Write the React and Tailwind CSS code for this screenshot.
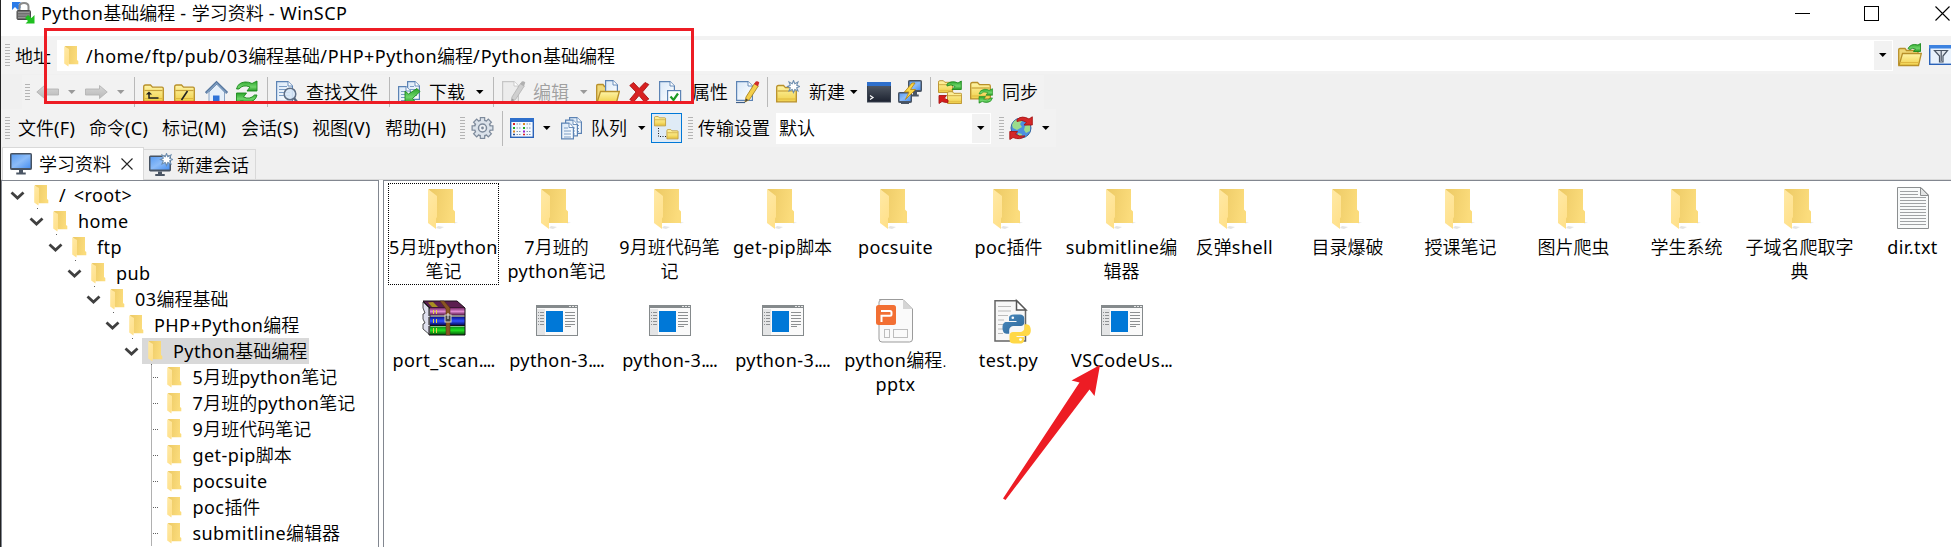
import React from "react";

/* Latin runs are slightly wider than the CJK grid, so they get their own tracking. */
function T({ children, className = "" }) {
  const parts = children.split(/(\.{3,}|\/|[\x20-\x2d\x30-\x7e]+(?:\.(?!\.)[\x20-\x2d\x30-\x7e]*)*)/).filter(Boolean);
  return (
    <span className={className}>
      {parts.map((p, i) => {
        if (/^\.{3,}/.test(p)) return <span key={i} className="font-normal tracking-[-0.9px]">{p}</span>;
        if (p === "/") return <span key={i} className="font-normal tracking-[0.9px]">{p}</span>;
        if (/^[\x20-\x7e]/.test(p)) return <span key={i} className="font-normal tracking-[0.42px]">{p}</span>;
        return <React.Fragment key={i}>{p}</React.Fragment>;
      })}
    </span>
  );
}

function Svg({ w = 24, h = 24, children, className = "" }) {
  return (
    <svg width={w} height={h} viewBox={`0 0 ${w} ${h}`} className={`block shrink-0 ${className}`}>
      {children}
    </svg>
  );
}

const Defs = () => (
  <svg width="0" height="0" className="absolute">
    <defs>
      <linearGradient id="fback" x1="0" y1="0" x2="1" y2="0.2"><stop offset="0" stopColor="#ecc964" /><stop offset="1" stopColor="#fbdc7c" /></linearGradient>
      <linearGradient id="ffront" x1="0" y1="0" x2="0.4" y2="1"><stop offset="0" stopColor="#ffe9a6" /><stop offset="1" stopColor="#ffe18c" /></linearGradient>
      <linearGradient id="yel" x1="0" y1="0" x2="0" y2="1"><stop offset="0" stopColor="#fff5a8" /><stop offset="1" stopColor="#f0d04a" /></linearGradient>
      <linearGradient id="grn" x1="0" y1="0" x2="0" y2="1"><stop offset="0" stopColor="#2aa52a" /><stop offset="0.6" stopColor="#6fd56a" /><stop offset="1" stopColor="#249a24" /></linearGradient>
      <linearGradient id="gry" x1="0" y1="0" x2="0" y2="1"><stop offset="0" stopColor="#d6d6d6" /><stop offset="1" stopColor="#b9b9b9" /></linearGradient>
      <linearGradient id="scr" x1="0" y1="0" x2="1" y2="1"><stop offset="0" stopColor="#5b9df2" /><stop offset="0.5" stopColor="#8cbcf8" /><stop offset="1" stopColor="#4a90f0" /></linearGradient>
      <linearGradient id="pap" x1="0" y1="0" x2="1" y2="1"><stop offset="0" stopColor="#d9e8f8" /><stop offset="1" stopColor="#ffffff" /></linearGradient>
      <linearGradient id="dark" x1="0" y1="0" x2="0" y2="1"><stop offset="0" stopColor="#59616c" /><stop offset="1" stopColor="#1c2230" /></linearGradient>
      <linearGradient id="rarp" x1="0" y1="0" x2="0" y2="1"><stop offset="0" stopColor="#7a2a6a" /><stop offset="0.5" stopColor="#e08ad0" /><stop offset="1" stopColor="#5a1a4c" /></linearGradient>
      <linearGradient id="rarb" x1="0" y1="0" x2="0" y2="1"><stop offset="0" stopColor="#0a1690" /><stop offset="0.5" stopColor="#3050ff" /><stop offset="1" stopColor="#060c60" /></linearGradient>
      <linearGradient id="rarg" x1="0" y1="0" x2="0" y2="1"><stop offset="0" stopColor="#0a8a14" /><stop offset="0.45" stopColor="#20e020" /><stop offset="1" stopColor="#045008" /></linearGradient>
      <linearGradient id="pyb" x1="0" y1="0" x2="1" y2="1"><stop offset="0" stopColor="#4b8bbe" /><stop offset="1" stopColor="#2c6699" /></linearGradient>
    </defs>
  </svg>
);

/* Small Explorer-style folder used in the tree and the address box. */
const FolderSmall = ({ dot }) => (
  <Svg w={15} h={22} className="overflow-visible">
    <path d="M1 1H13V15L14.3 16V19.3H5Z" fill="url(#fback)" />
    <path d="M0.2 1.2L5 4V17.5L4.4 21.6L0.2 18.6Z" fill="url(#ffront)" />
    {dot && <rect x="3" y="24" width="1" height="1" fill="#606060" />}
  </Svg>
);

const FolderLarge = () => (
  <Svg w={48} h={48}>
    <path d="M16 44L20 45L24 43L18 42Z M34 38L38 38.6L34 39.4Z" fill="#e4e4e4" />
    <path d="M8.5 5H33V25.5L35 27.5V39H12Z" fill="url(#fback)" />
    <path d="M8 5L17 12V33L16 34.5V45L8 39Z" fill="url(#ffront)" />
  </Svg>
);

const ExeIcon = () => (
  <Svg w={48} h={48}>
    <g transform="translate(-1 0)">
      <rect x="4.5" y="8.5" width="41" height="30" fill="#fafafa" stroke="#858a8c" />
      <rect x="4" y="8" width="42" height="3" fill="#858a8c" />
      <path d="M37 9.5h2M40 9.5h2M43 9.5h2" stroke="#e8e8e8" />
      <rect x="5" y="12" width="8" height="26" fill="#e4e5e6" />
      <path d="M6 15.5h1M8 15.5h4M6 18.5h1M8 18.5h4M6 21.5h1M8 21.5h4M6 24.5h1M8 24.5h4M6 27.5h1M8 27.5h4" stroke="#8d9092" />
      <rect x="14" y="14" width="17" height="21" fill="#0078d7" />
      <path d="M33 15.5h10M33 18.5h10M33 21.5h10M33 24.5h10M33 27.5h10M33 29.5h6" stroke="#8d9092" />
    </g>
  </Svg>
);

const RarIcon = () => (
  <Svg w={48} h={48}>
    <g transform="translate(-1 0)">
      <path d="M4 5L11 12V38L4 32V27L6 26L4 22V17L6 16L4 11Z" fill="#dfe0ee" stroke="#222" strokeWidth="0.8" />
      <path d="M4 4H38L46 11H11Z" fill="#5c1f50" stroke="#1c1018" />
      <path d="M9 5.500L13 10L19 10L14 5Z" fill="#a89020" />
      <path d="M11 11H46V18H11Z" fill="url(#rarp)" />
      <path d="M11 20H46V28H11Z" fill="url(#rarb)" />
      <path d="M11 29.500H46V38H11Z" fill="url(#rarg)" />
      <path d="M10 11V19M10 20V28M10 29V38M11 19H46M11 28.500H46M10 38H46M46 11V38" stroke="#141014" fill="none" />
      <path d="M14.500 13v4M17.500 13v4M14.500 22v4M17.500 22v4M14.500 31v5M17.500 31v5" stroke="#e6d24a" />
      <path d="M21 4H25L31 11V38H27V12Z" fill="#8a5523" stroke="#4c2c10" strokeWidth="0.5" />
      <rect x="26" y="18" width="6" height="7" fill="#444" stroke="#d8d4c8" />
      <path d="M29 16v6" stroke="#eee" />
    </g>
  </Svg>
);

const PptIcon = () => (
  <Svg w={48} h={48}>
    <g transform="translate(1 0)">
      <path d="M6.500 2.500H30L39.500 12V42a3 3 0 0 1-3 3H9a3 3 0 0 1-3-3V5a3 3 0 0 1 3-2.500Z" fill="#fafafa" stroke="#9b9b9b" />
      <path d="M30 3V12H39Z" fill="#d5d5d5" />
      <rect x="3" y="8" width="20" height="20" rx="2.500" fill="#f26f33" />
      <path d="M8 14h9a1.500 1.500 0 0 1 1.500 1.500v1.800a1.500 1.500 0 0 1-1.500 1.500H8.500V25" fill="none" stroke="#fff" strokeWidth="2" />
      <rect x="11.500" y="32.500" width="5" height="8" fill="none" stroke="#bdbdbd" />
      <rect x="20.500" y="32.500" width="14" height="8" fill="none" stroke="#bdbdbd" />
    </g>
  </Svg>
);

const PyIcon = () => (
  <Svg w={48} h={48}>
    <g transform="translate(1 0)">
      <path d="M9 3.700H30.500L39.500 13V44H9Z" fill="#f7f7f7" stroke="#666" strokeWidth="1.500" />
      <path d="M30.500 3.500V13H40Z" fill="#fff" stroke="#555" strokeWidth="1.500" />
      <path d="M12 9.500h13M12 14h13M12 18.500h10M12 23h6M12 27.500h6M12 32h6M12 36.500h5" stroke="#bbb" />
      <path d="M28 17.500c-3.500 0-5 1.200-5 3.600v3h7.500v1H20.500c-3 0-4 2.500-4 5.700s1.300 6 4 6h2.700v-3.500c0-2.600 2-4.300 4.300-4.300h7.200c2 0 3.500-1.500 3.500-3.500v-4.400c0-2.300-2-3.600-4.200-3.600Z" fill="url(#pyb)" />
      <path d="M33 46.500c3.500 0 5.200-1.200 5.200-3.600v-3H30.500v-1h9.800c3 0 4.500-2.500 4.500-5.700s-1.300-6-4.500-6h-1.800v3.500c0 2.600-2 4.300-4.300 4.300H27c-2 0-3.500 1.500-3.500 3.500v4.400c0 2.300 2 3.600 4.500 3.600Z" fill="#ffd846" />
      <circle cx="26.800" cy="20.800" r="1.300" fill="#fff" /><circle cx="34.500" cy="42.600" r="1.400" fill="#fff" />
    </g>
  </Svg>
);

const TxtIcon = () => (
  <Svg w={48} h={48}>
    <path d="M8.500 3.500H32L39.500 11V44.500H8.500Z" fill="#f8fafa" stroke="#8c8f90" />
    <path d="M31.500 3.500V11.500H39.500Z" fill="#e2e4e4" stroke="#8c8f90" />
    <path d="M11 7.500h18M11 10.500h18M11 13.500h26M11 16.500h26M11 19.500h26M11 22.500h26M11 25.500h26M11 28.500h26M11 31.500h26M11 34.500h26M11 37.500h26M11 40.500h26" stroke="#9fa2a4" />
  </Svg>
);

/* Toolbar glyphs */
const Fold = ({ x = 0, y = 0, s = 1, children }) => (
  <g transform={`translate(${x} ${y}) scale(${s})`}>
    <path d="M0.700 17.300V3Q0.700 1 2.500 1H7.500L9.500 3.200H19Q20.300 3.200 20.300 4.500V17.300Z" fill="url(#yel)" stroke="#b8902a" strokeWidth="1.300" />
    <path d="M1.500 6.500H19.500" stroke="#c8a23a" strokeWidth="1.200" />
    <path d="M2 14.500H19.500" stroke="#e0b840" />
    {children}
  </g>
);
const Doc = ({ x = 0, y = 0, w = 16, h = 20, gray, lines }) => (
  <g transform={`translate(${x} ${y})`}>
    <path d={`M0.600 0.600H${w - 5}L${w - 0.600} 5V${h - 0.600}H0.600Z`} fill={gray ? "#ececec" : "url(#pap)"} stroke={gray ? "#c6c6c6" : "#5c83b4"} strokeWidth="1.200" />
    <path d={`M${w - 5} 0.600V5H${w - 0.600}`} fill="#fff" stroke={gray ? "#c6c6c6" : "#5c83b4"} strokeWidth="0.900" />
    {lines && <path d={`M3 5.500H${w - 6}M3 8.500H${w - 3}M3 11.500H${w - 3}M3 14.500H${w - 3}`} stroke="#7b9cc4" />}
  </g>
);
const Monitor = ({ x = 0, y = 0, w = 22, h = 16 }) => (
  <g transform={`translate(${x} ${y})`}>
    <path d={`M${w / 2 - 2} ${h}h4v2.500h${w / 8}v2h-${4 + w / 4}v-2h${w / 8}Z`} fill="#4b5664" />
    <rect x="0.500" y="0.500" width={w - 1} height={h - 1} rx="0.800" fill="#4b5664" stroke="#465262" />
    <rect x="1.500" y="1.500" width={w - 3} height={h - 3.500} fill="url(#scr)" />
  </g>
);
const Star = ({ x, y }) => (
  <path transform={`translate(${x} ${y})`} d="M6 0L7.300 3.200L10.500 1.500L9.200 4.800L12 6L9.200 7.200L10.500 10.500L7.300 9L6 12L4.700 9L1.500 10.500L2.800 7.200L0 6L2.800 4.800L1.500 1.500L4.700 3.200Z" fill="#fff" stroke="#6f8fb0" strokeWidth="1.100" />
);
const Pencil = ({ gray }) => (
  <g>
    <path d="M10 17L18.500 3.500L22.300 6L13.500 19.500L9 22Z" fill={gray ? "#cfcfcf" : "#f4cf4a"} stroke={gray ? "#b5b5b5" : "#a88424"} strokeWidth="0.900" />
    <path d="M18 4L19.800 1.500Q21.500 0.800 23.300 2.500L22 6.200Z" fill={gray ? "#b0b0b0" : "#cf2a2a"} />
    <path d="M9 22L10 18.500L12.300 20Z" fill={gray ? "#999" : "#444"} />
  </g>
);
const ArrowGray = ({ flip }) => (
  <Svg>
    <path transform={flip ? "matrix(-1 0 0 1 24 0)" : undefined} d="M0.800 12L8.500 5.500V9H22.500V15H8.500V18.500Z" fill="url(#gry)" stroke="#b4b4b4" strokeWidth="0.900" />
  </Svg>
);
const Caret = ({ gray, className = "" }) => (
  <Svg w={8} h={4} className={className}><path d="M0 0H7.500L3.750 4Z" fill={gray ? "#9a9a9a" : "#000"} /></Svg>
);
const Recycle = ({ c = "url(#grn)", s = "#1d8a1d" }) => (
  <g fill={c} stroke={s} strokeWidth="0.900">
    <path d="M1.500 9Q3 2.500 10 2Q14 1.800 17 3.500L22 1V11H12L15 7Q8 4 4 9Z" />
    <path d="M22 15Q20.500 21.500 13.500 22Q9.500 22.200 6.500 20.500L1.500 23V13H11.500L8.500 17Q15 20 19.500 15Z" />
  </g>
);

const Grip = ({ n }) => (
  <Svg w={5} h={n * 3 - 2}>
    {Array.from({ length: n }, (_, i) => <rect key={i} x="0" y={i * 3} width="5" height="1" fill="#b4b4b4" />)}
  </Svg>
);
const Sep = ({ className = "h-[30px]" }) => <div className={`w-px bg-[#b9b9b9] ${className}`} />;
const Slot = ({ className, children }) => <div className={`flex shrink-0 items-center ${className}`}>{children}</div>;

const GearIcon = () => (
  <Svg>
    <g stroke="#7d8a9b" strokeLinecap="butt">
      {[0, 45, 90, 135].map((a) => (
        <path key={a} transform={`rotate(${a} 11.500 12)`} d="M11.500 1V23" strokeWidth="5.500" />
      ))}
    </g>
    <circle cx="11.500" cy="12" r="8" fill="#dbe2ea" stroke="#7d8a9b" strokeWidth="1.400" />
    <g stroke="#dbe2ea">
      {[0, 45, 90, 135].map((a) => (
        <path key={a} transform={`rotate(${a} 11.500 12)`} d="M11.500 2.200V21.800" strokeWidth="3.200" />
      ))}
    </g>
    <circle cx="11.500" cy="12" r="4" fill="#eef1f5" stroke="#7d8a9b" strokeWidth="1.500" />
    <circle cx="11.500" cy="12" r="1.400" fill="#7d8a9b" />
  </Svg>
);

function Toolbar() {
  return (
    <div className="ml-[21px] mt-px flex h-[34px] w-[1022px] items-center bg-[#f2f2f2] pl-[3px]">
      <Slot className="w-[11px]"><Grip n={6} /></Slot>
      <Slot className="w-8"><ArrowGray /></Slot>
      <Slot className="w-4"><Caret gray /></Slot>
      <Slot className="w-[33px]"><ArrowGray flip /></Slot>
      <Slot className="w-[17px]"><Caret gray /></Slot>
      <Slot className="w-[9px]"><Sep /></Slot>
      <Slot className="w-[31px]"><Svg><Fold y={4}><path d="M15.500 14H6V9" fill="none" stroke="#222" strokeWidth="1.500" /><path d="M2.800 10.500L6 7.500L9.200 10.500Z" fill="#222" /></Fold></Svg></Slot>
      <Slot className="w-[31px]"><Svg><Fold y={4}><path d="M7.500 16L13.500 7" stroke="#222" strokeWidth="1.600" /></Fold></Svg></Slot>
      <Slot className="w-[30px]">
        <Svg>
          <path d="M4 12V22.500H19.500V12L12 4Z" fill="#e6f0fa" stroke="#8aa4c4" />
          <path d="M0.800 13L11.500 2.500L22.200 13" fill="none" stroke="#55769e" strokeWidth="2.600" />
          <path d="M1.500 13L11.500 3.200L21.500 13" fill="none" stroke="#a9c6e4" strokeWidth="0.800" />
          <rect x="8" y="15.500" width="6.500" height="7.500" fill="#2f74d8" />
        </Svg>
      </Slot>
      <Slot className="w-8"><Svg><Recycle /></Svg></Slot>
      <Slot className="w-[9px]"><Sep /></Slot>
      <Slot className="w-[30px]">
        <Svg>
          <Doc x={0} y={1} w={17} h={21} lines />
          <circle cx="14" cy="14" r="5.800" fill="#d6e6f6" fillOpacity="0.900" stroke="#5f6f86" strokeWidth="1.500" />
          <path d="M17.800 18L22 23" stroke="#55667c" strokeWidth="2.400" />
        </Svg>
      </Slot>
      <Slot className="w-[83px]"><T>查找文件</T></Slot>
      <Slot className="w-[9px]"><Sep /></Slot>
      <Slot className="w-[31px]">
        <Svg>
          <Doc x={9} y={1} w={13} h={19} lines /><Doc x={0} y={6} w={13} h={17} lines />
          <path d="M7 23V11L10.500 14L19 8.500L22 11.500L14.500 18.500L18 22.500Z" fill="url(#grn)" stroke="#1d8a1d" strokeWidth="0.900" />
        </Svg>
      </Slot>
      <Slot className="w-[47px]"><T>下载</T></Slot>
      <Slot className="w-[17px]"><Caret /></Slot>
      <Slot className="w-[9px]"><Sep /></Slot>
      <Slot className="w-[31px]"><Svg><Doc y={1} w={17} h={22} gray /><Pencil gray /></Svg></Slot>
      <Slot className="w-[47px] text-[#a0a0a0]"><T>编辑</T></Slot>
      <Slot className="w-4"><Caret gray /></Slot>
      <Slot className="w-[33px]">
        <Svg>
          <path d="M0.700 22V5.500Q0.700 4.500 2 4.500H7L8.500 6.500H18V22Z" fill="#f0d878" stroke="#b8902a" strokeWidth="1.300" />
          <Doc x={9} y={0} w={13} h={16} />
          <path d="M4.500 11.500H23.300L20.500 22.500H1Z" fill="url(#yel)" stroke="#b8902a" strokeWidth="1.300" />
        </Svg>
      </Slot>
      <Slot className="w-[30px]">
        <Svg><path d="M0.800 5.500L4.500 2.500L10.200 8.500L16 2.500L19.800 4.500L13.500 12L19.800 19L15.500 22L10 15.500L4.500 22L0.800 19.500L7 12Z" fill="#d82020" stroke="#a81414" strokeWidth="0.900" /></Svg>
      </Slot>
      <Slot className="w-[33px]">
        <Svg><Doc y={1} w={16} h={21} /><rect x="8.600" y="10.600" width="13" height="12" fill="#fff" stroke="#5c83b4" strokeWidth="1.200" /><path d="M11.500 16.500L14.500 20L19 13.500" fill="none" stroke="#1e9a24" strokeWidth="2.200" /></Svg>
      </Slot>
      <Slot className="w-11"><T>属性</T></Slot>
      <Slot className="w-[31px]"><Svg><Doc y={1} w={17} h={20} /><path d="M0 22.500H9" stroke="#3f5f88" strokeWidth="1.200" /><Pencil /></Svg></Slot>
      <Slot className="w-[9px]"><Sep /></Slot>
      <Slot className="w-[33px]"><Svg><Fold y={4.500} /><Star x={11.500} y={0.500} /></Svg></Slot>
      <Slot className="w-[41px]"><T>新建</T></Slot>
      <Slot className="w-[17px]"><Caret /></Slot>
      <Slot className="w-[31px]">
        <Svg><rect x="0.500" y="2.500" width="23" height="19.500" fill="url(#dark)" stroke="#3a4350" /><rect x="0" y="2" width="24" height="4" fill="#2e6fcb" /><path d="M3 15.500L6 17.500L3 19.500" fill="none" stroke="#fff" strokeWidth="1.200" /></Svg>
      </Slot>
      <Slot className="w-8">
        <Svg><Monitor x={10} y={0} w={14} h={12} /><Monitor x={0} y={12} w={14} h={11} /><path d="M14 3L6.500 12H11L7.500 19.500L17.500 9.500H12.500L17 3Z" fill="#fbd848" stroke="#b88a1c" strokeWidth="0.900" /><path d="M3 23.500h8" stroke="#4b5664" /></Svg>
      </Slot>
      <Slot className="w-2"><Sep /></Slot>
      <Slot className="w-8">
        <Svg>
          <Fold s={0.720} y={0} /><Fold x={9} y={11} s={0.720} />
          <path d="M9 4Q14 0 20 3L23.300 1V9.500H14L17 6.500Q13 3.500 9 6Z" fill="url(#grn)" stroke="#1d8a1d" strokeWidth="0.900" />
          <path d="M1 15.500H8.500L6.500 18Q7.500 19.500 10 20V22.500Q6 22.500 4 21.500L1 23.500Z" fill="#d41c1c" stroke="#a81414" strokeWidth="0.900" />
        </Svg>
      </Slot>
      <Slot className="w-8"><Svg><Fold y={1.500} /><g transform="translate(8 8) scale(0.660)"><Recycle /></g></Svg></Slot>
      <Slot className="w-10"><T>同步</T></Slot>
    </div>
  );
}

function MenuBar() {
  return (
    <div className="flex h-[38px] items-center">
      <div className="flex h-full w-[1055px] items-center bg-[#f2f2f2] pl-1">
        <Slot className="w-[13px]"><Grip n={8} /></Slot>
        <Slot className="w-[71px]"><T>文件(F)</T></Slot>
        <Slot className="w-[73px]"><T>命令(C)</T></Slot>
        <Slot className="w-[79px]"><T>标记(M)</T></Slot>
        <Slot className="w-[71px]"><T>会话(S)</T></Slot>
        <Slot className="w-[73px]"><T>视图(V)</T></Slot>
        <Slot className="w-[75px]"><T>帮助(H)</T></Slot>
        <Slot className="w-[11px]"><Grip n={8} /></Slot>
        <Slot className="w-[31px]"><GearIcon /></Slot>
        <Slot className="w-2"><Sep className="h-[35px]" /></Slot>
        <Slot className="w-[33px]">
          <Svg>
            <rect x="0.700" y="2.700" width="22.600" height="18.600" fill="#f4f9ff" stroke="#2a62b8" strokeWidth="1.400" /><rect x="0" y="2" width="24" height="4" fill="#2e6fcb" />
            <path d="M3 8h2" stroke="#d22" strokeWidth="2" /><path d="M3 12h2" stroke="#2a2" strokeWidth="2" /><path d="M3 15.500h2" stroke="#d82" strokeWidth="2" /><path d="M3 18.500h2" stroke="#248" strokeWidth="1.500" />
            <path d="M13 8h2" stroke="#d82" strokeWidth="2" /><path d="M13 12h2" stroke="#2a2" strokeWidth="2" /><path d="M13 15.500h2" stroke="#92c" strokeWidth="2" /><path d="M13 18.500h2" stroke="#d22" strokeWidth="1.500" />
            <path d="M6.500 8h4M6.500 12h4M6.500 15.500h4M6.500 18.500h4M16.500 8h4M16.500 12h4M16.500 15.500h4M16.500 18.500h4" stroke="#7f93ad" strokeDasharray="1.500 1" />
          </Svg>
        </Slot>
        <Slot className="w-[18px]"><Caret /></Slot>
        <Slot className="w-[30px]"><Svg><Doc x={8} y={1} w={13} h={17} lines /><Doc x={4} y={3.500} w={13} h={17} lines /><Doc x={0} y={6.500} w={13} h={17} lines /></Svg></Slot>
        <Slot className="w-[47px]"><T>队列</T></Slot>
        <Slot className="w-[13px]"><Caret /></Slot>
        <Slot className="w-[37px]">
          <div className="flex h-[30px] w-[31px] items-center justify-center border border-[#0078d7] bg-[#dfebf6]">
            <Svg w={25} h={24}><Fold s={0.570} y={0} /><Fold x={12.500} y={13} s={0.570} /><path d="M4.500 12V20.500H12" fill="none" stroke="#222" strokeDasharray="1 1.500" /></Svg>
          </div>
        </Slot>
        <Slot className="w-[10px]"><Grip n={8} /></Slot>
        <Slot className="w-[78px]"><T>传输设置</T></Slot>
        <Slot className="w-[223px]">
          <div className="flex h-[31px] w-[215px] items-center justify-between bg-white pl-[3px] pr-px">
            <T>默认</T>
            <div className="flex h-[29px] w-[18px] items-center justify-center bg-[#f2f2f2]"><Caret /></div>
          </div>
        </Slot>
        <Slot className="w-[10px]"><Grip n={8} /></Slot>
        <Slot className="w-[33px]">
          <Svg>
            <circle cx="12" cy="12" r="10" fill="#4c90e0" stroke="#35679f" />
            <path d="M5 5Q10 2 13 5L11 8L13 11L8 14L4 12L3 9ZM16 10L21 8L21 15L17 17L15 14ZM9 17L13 18L12 21L9 20Z" fill="#9bdc8c" />
            <path d="M8 3.500Q13 -1 20 3L23.300 0.800V9H15L17.500 6.200Q13 3 8 5.500Z" fill="#d42828" stroke="#a81414" strokeWidth="0.900" />
            <path d="M0.800 15.500H8.500L6.500 18.200Q10 20.800 16 20Q11 24.500 4 21.500L0.800 23.500Z" fill="#d42828" stroke="#a81414" strokeWidth="0.900" />
          </Svg>
        </Slot>
        <Slot className="w-2"><Caret /></Slot>
      </div>
    </div>
  );
}

const branch = ["/ <root>", "home", "ftp", "pub", "03编程基础", "PHP+Python编程", "Python基础编程"];
const leaves = ["5月班python笔记", "7月班的python笔记", "9月班代码笔记", "get-pip脚本", "pocsuite", "poc插件", "submitline编辑器"];

function Tree() {
  return (
    <div className="h-full w-[378px] shrink-0 overflow-hidden border border-b-0 border-[#828790] bg-white pt-px">
      {branch.map((name, i) => (
        <div key={name} className="flex h-[26px] items-center" style={{ paddingLeft: 8 + i * 19 }}>
          <Svg w={15} h={9}><path d="M1.500 1.500L7.500 7L13.500 1.500" fill="none" stroke="#404040" strokeWidth="2.800" /></Svg>
          <div className={`ml-[3px] flex h-[26px] items-center pl-[6px] pr-[2px] ${i === 6 ? "bg-[#d9d9d9]" : ""}`}>
            <FolderSmall dot />
            <T className={i === 0 ? "ml-[10px] whitespace-pre [word-spacing:2px]" : "ml-[10px] whitespace-pre"}>{name}</T>
          </div>
        </div>
      ))}
      {leaves.map((name) => (
        <div key={name} className="flex h-[26px] items-center pl-[149px]">
          <Svg w={8} h={26}>
            <path d="M0.500 0.500V26" stroke="#606060" strokeDasharray="1 1" />
            <path d="M2 13.500H8" stroke="#606060" strokeDasharray="1 1" />
          </Svg>
          <div className="ml-2"><FolderSmall /></div>
          <T className="ml-[10.500px]">{name}</T>
        </div>
      ))}
    </div>
  );
}

const files = [
  [FolderLarge, "5月班python", "笔记"], [FolderLarge, "7月班的", "python笔记"], [FolderLarge, "9月班代码笔", "记"], [FolderLarge, "get-pip脚本"],
  [FolderLarge, "pocsuite"], [FolderLarge, "poc插件"], [FolderLarge, "submitline编", "辑器"], [FolderLarge, "反弹shell"], [FolderLarge, "目录爆破"],
  [FolderLarge, "授课笔记"], [FolderLarge, "图片爬虫"], [FolderLarge, "学生系统"], [FolderLarge, "子域名爬取字", "典"], [TxtIcon, "dir.txt"],
  [RarIcon, "port_scan...."], [ExeIcon, "python-3...."], [ExeIcon, "python-3...."], [ExeIcon, "python-3...."], [PptIcon, "python编程.", "pptx"],
  [PyIcon, "test.py"], [ExeIcon, "VSCodeUs..."],
];

function Files() {
  return (
    <div className="ml-1 h-full flex-1 overflow-hidden border-l border-t border-[#828790] bg-white pl-1 pt-[2px]">
      <div className="grid w-[1582px] grid-cols-[repeat(14,113px)]">
        {files.map(([Icon, a, b], i) => (
          <div key={i} className={`mb-[11px] flex h-[102px] w-[111px] flex-col items-center border ${i === 0 ? "border-dotted border-black" : "border-transparent"}`}>
            <Icon />
            <div className="mt-[3px] flex flex-col items-center whitespace-nowrap leading-6">
              <T>{a}</T>
              {b && <T>{b}</T>}
            </div>
          </div>
        ))}
      </div>
    </div>
  );
}

export default function App() {
  return (
    <div className="relative flex h-[547px] w-[1951px] flex-col overflow-hidden border-l border-[#222] bg-[#f0f0f0] font-['Noto_Sans','Noto_Sans_CJK_SC',sans-serif] text-[18px] font-[350] leading-[26px] text-black">
      <Defs />
      <div className="flex h-9 shrink-0 items-start bg-white pl-[11px]">
        <Svg w={24} h={24} className="mt-px">
          <path d="M0 1H9L6.500 3.500L9 6L6 9L3 6L0 9Z" fill="#2b7be8" />
          <path d="M7.500 10V5.500Q7.500 2 12 2T16.500 5.500V10" fill="none" stroke="#8a8a8a" strokeWidth="2" />
          <rect x="5" y="9.500" width="13.500" height="9" rx="1" fill="#707070" stroke="#4a4a4a" />
          <path d="M6 11.500H17.500M6 14H17.500M6 16.500H17.500" stroke="#979797" />
          <path d="M22.500 22.500H13.500L16 20L13 17L16 14L19.500 17L22.500 14Z" fill="#1fc020" />
        </Svg>
        <T className="ml-[5px]">Python基础编程 - 学习资料 - WinSCP</T>
        <Svg w={156} h={16} className="ml-auto mt-[6px]">
          <path d="M0 7.500H15" stroke="#000" /><rect x="69.500" y="0.500" width="14" height="14" fill="none" stroke="#000" /><path d="M140.500 0.500L154.500 14.500M154.500 0.500L140.500 14.500" stroke="#000" strokeWidth="1.100" />
        </Svg>
      </div>
      <div className="flex h-[38px] shrink-0 items-center bg-[#f2f2f2] pl-1">
        <Slot className="w-[10px]"><Grip n={8} /></Slot>
        <Slot className="w-[42px] pt-0.5"><T>地址</T></Slot>
        <div className="flex h-[31px] w-[1836px] shrink-0 items-center bg-white pl-[7px] pr-px">
          <div className="pt-0.5"><FolderSmall /></div>
          <T className="ml-[7px] flex-1 pt-0.5">/home/ftp/pub/03编程基础/PHP+Python编程/Python基础编程</T>
          <div className="flex h-[29px] w-[18px] items-center justify-center bg-[#f2f2f2]"><Caret /></div>
        </div>
        <Slot className="ml-[5px] w-[31px]">
          <Svg>
            <path d="M0.700 22V6.500Q0.700 5.500 2 5.500H7L8.500 7.500H20V22Z" fill="#f0d878" stroke="#b8902a" strokeWidth="1.300" />
            <path d="M4.500 10.500H23.300L20.500 22.500H1Z" fill="url(#yel)" stroke="#b8902a" strokeWidth="1.300" />
            <path d="M2.500 19.500H20.500" stroke="#e0b840" />
            <path d="M10 5.500Q13 0 20 2L22.500 0.500V8.500H15.500L17.500 6Q14 4.500 12 6.500Z" fill="url(#grn)" stroke="#1d8a1d" strokeWidth="0.900" />
          </Svg>
        </Slot>
        <Svg>
          <rect x="0.700" y="2.700" width="25" height="18.600" fill="#e9f2fc" stroke="#2a62b8" strokeWidth="1.400" /><rect x="0" y="2" width="24" height="3.500" fill="#3c82e0" />
          <path d="M5.500 7.500H18.500L14 13V19H10.500V13Z" fill="#dfe5ec" stroke="#4a5564" strokeWidth="1.200" /><path d="M12.200 8V18" stroke="#4a5564" strokeWidth="1.200" />
        </Svg>
      </div>
      <Toolbar />
      <MenuBar />
      <div className="flex h-[33px] shrink-0 items-end border-b border-[#d9d9d9]">
        <div className="-mb-px ml-px flex h-[33px] w-[142px] items-center border border-b-0 border-[#d9d9d9] bg-white pl-[7px]">
          <Svg w={22} h={22}><Monitor w={22} h={17} /></Svg>
          <T className="ml-[7px]">学习资料</T>
          <Svg w={12} h={12} className="ml-[10px]"><path d="M0.500 0.500L11.500 11.500M11.500 0.500L0.500 11.500" stroke="#222" strokeWidth="1.100" /></Svg>
        </div>
        <div className="flex h-[30px] w-[112px] items-center border border-b-0 border-l-0 border-[#d9d9d9] pl-[5px]">
          <Svg w={24} h={24}><Monitor x={0} y={2.500} w={22} h={16} /><Star x={11.500} y={0.500} /></Svg>
          <T className="ml-1">新建会话</T>
        </div>
      </div>
      <div className="flex min-h-0 flex-1 bg-white">
        <Tree />
        <Files />
      </div>
      {/* Annotations drawn over the window */}
      <div className="absolute left-[43px] top-[28px] h-[76px] w-[650px] border-[3px] border-[#ed1c24]" />
      <svg width="100" height="140" viewBox="0 0 100 140" className="absolute left-[1001px] top-[363px]">
        <path d="M1 135.500L77.500 19.500L69.500 17.500L98 2L92.500 33L87.500 26.500L3.500 137Z" fill="#ed1c24" />
      </svg>
    </div>
  );
}
